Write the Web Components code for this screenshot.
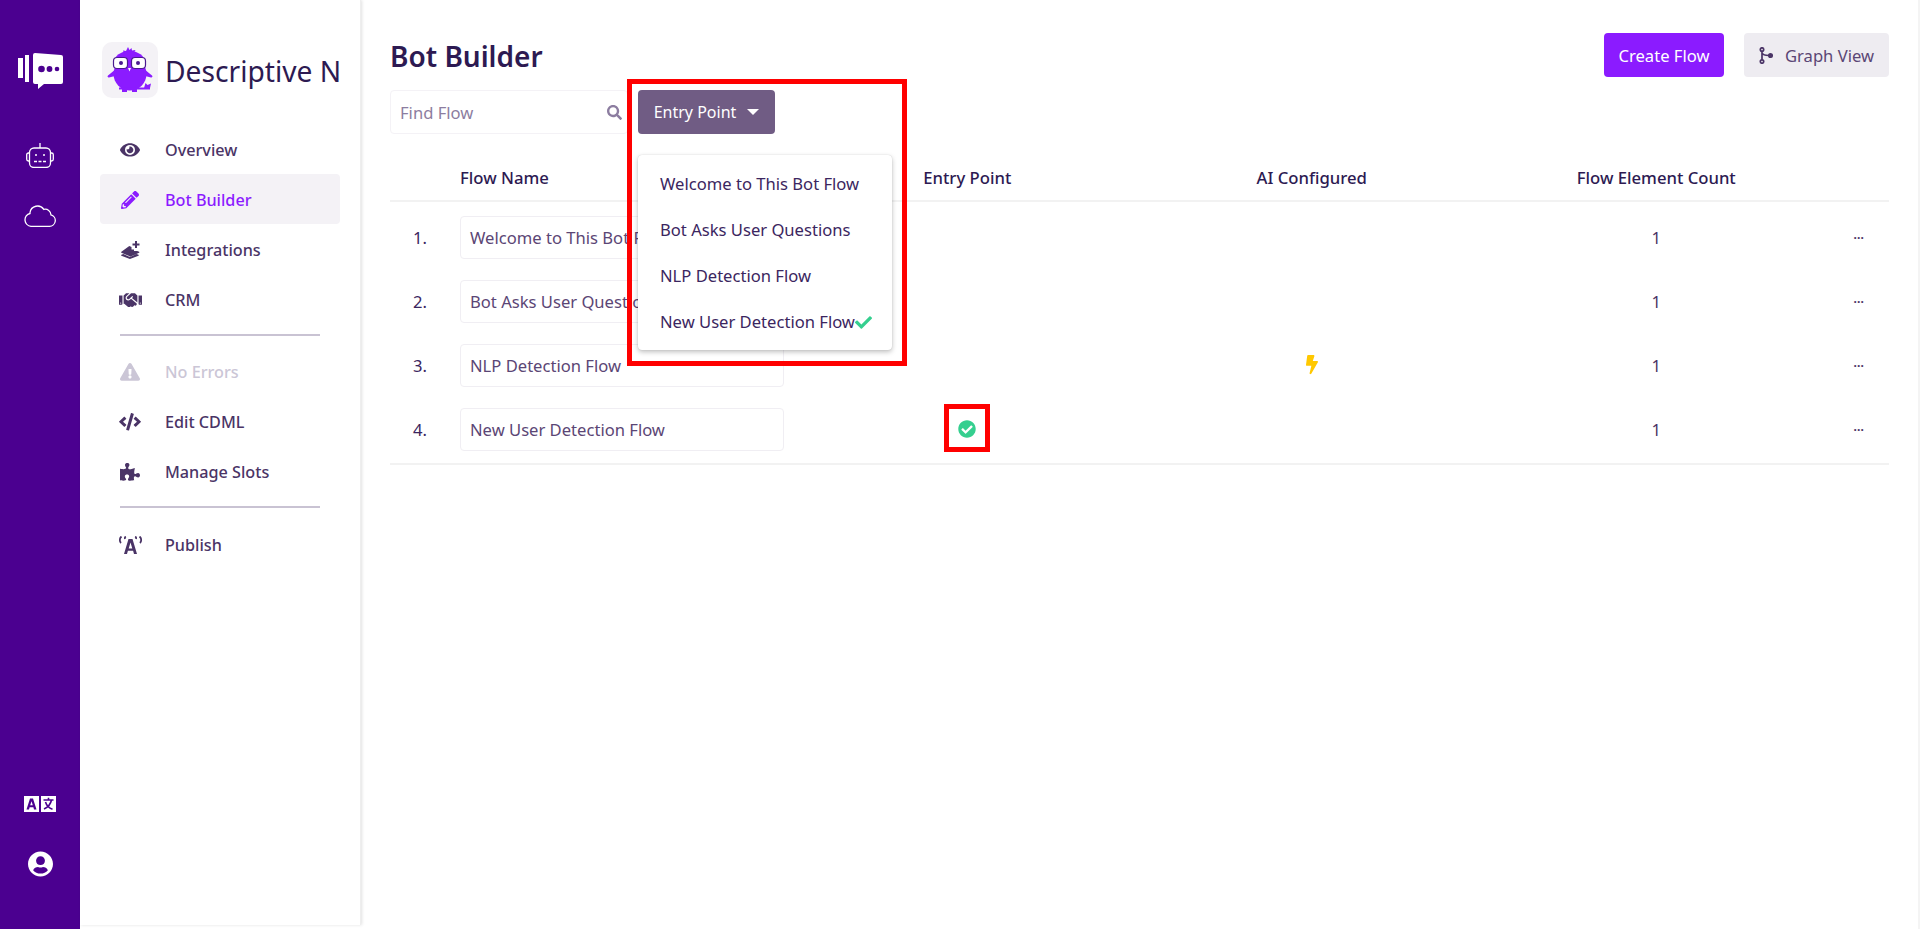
<!DOCTYPE html>
<html>
<head>
<meta charset="utf-8">
<title>Bot Builder</title>
<style>
  html, body { margin: 0; height: 100%; background: #fff; }
  body { font-family: "Noto Sans", "Open Sans", sans-serif; color: #2d1a52; overflow: hidden; }
  app-shell { height: 929px; }
</style>
</head>
<body>
<app-shell>
  <icon-rail slot="rail"></icon-rail>
  <side-nav slot="nav" name="Descriptive N"></side-nav>
  <builder-page slot="main"></builder-page>
</app-shell>

<script>
// font awesome style shapes, [viewBox width, path]
const ICONS = {
  eye: [576, 'M572.52 241.4C518.29 135.59 410.93 64 288 64S57.68 135.64 3.48 241.41a32.35 32.35 0 0 0 0 29.19C57.71 376.41 165.07 448 288 448s230.32-71.64 284.52-177.41a32.35 32.35 0 0 0 0-29.19zM288 400a144 144 0 1 1 144-144 143.93 143.93 0 0 1-144 144zm0-240a95.31 95.31 0 0 0-25.31 3.79 47.85 47.85 0 0 1-66.9 66.9A95.78 95.78 0 1 0 288 160z'],
  pencil: [512, 'M497.9 142.1l-46.1 46.1c-4.7 4.7-12.3 4.7-17 0l-111-111c-4.7-4.7-4.7-12.3 0-17l46.1-46.1c18.7-18.7 49.1-18.7 67.9 0l60.1 60.1c18.8 18.7 18.8 49.1 0 67.9zM284.2 99.8L21.6 362.4.4 483.9c-2.9 16.4 11.4 30.6 27.8 27.8l121.5-21.3 262.6-262.6c4.7-4.7 4.7-12.3 0-17l-111-111c-4.8-4.7-12.4-4.7-17.1 0zM124.1 339.9c-5.5-5.5-5.5-14.3 0-19.8l154-154c5.5-5.5 14.3-5.5 19.8 0s5.5 14.3 0 19.8l-154 154c-5.5 5.5-14.3 5.5-19.8 0zM88 424h48v36.3l-64.5 11.3-31.1-31.1L51.7 376H88v48z'],
  handshake: [640, 'M434.7 64h-85.9c-8 0-15.7 3-21.6 8.4l-98.3 90c-.1.1-.2.3-.3.4-16.6 15.6-16.3 40.5-2.1 56 12.7 13.9 39.4 17.6 56.1 2.7.1-.1.3-.1.4-.2l79.9-73.2c6.5-5.9 16.7-5.5 22.6 1 6 6.5 5.5 16.6-1 22.6l-26.1 23.9L504 313.8c2.9 2.4 5.5 5 7.9 7.7V128l-54.6-54.6c-5.9-6-14.1-9.4-22.6-9.4zM544 128.2v223.9c0 17.7 14.3 32 32 32h64V128.2h-96zm48 223.9c-8.8 0-16-7.2-16-16s7.2-16 16-16 16 7.2 16 16-7.2 16-16 16zM0 384h64c17.7 0 32-14.3 32-32V128.2H0V384zm48-63.9c8.8 0 16 7.2 16 16s-7.2 16-16 16-16-7.2-16-16c0-8.9 7.2-16 16-16zm435.9 18.6L334.6 217.5l-30 27.5c-29.7 27.1-75.2 24.5-101.7-4.4-26.9-29.4-24.8-74.9 4.4-101.7L289.1 64h-83.8c-8.5 0-16.6 3.4-22.6 9.4L128 128v223.9h18.3l90.5 81.9c27.4 22.3 67.7 18.1 90-9.3l.2-.2 17.9 15.5c15.9 13 39.4 10.5 52.3-5.4l31.4-38.6 5.4 4.4c13.7 11.1 33.9 9.1 45-4.7l9.5-11.7c11.2-13.8 9.1-33.9-4.6-45.1z'],
  warning: [576, 'M569.517 440.013C587.975 472.007 564.806 512 527.94 512H48.054c-36.937 0-59.999-40.055-41.577-71.987L246.423 23.985c18.467-32.009 64.72-31.951 83.154 0l239.94 416.028zM288 354c-25.405 0-46 20.595-46 46s20.595 46 46 46 46-20.595 46-46-20.595-46-46-46zm-43.673-165.346l7.418 136c.347 6.364 5.609 11.346 11.982 11.346h48.546c6.373 0 11.635-4.982 11.982-11.346l7.418-136c.375-6.874-5.098-12.654-11.982-12.654h-63.383c-6.884 0-12.356 5.78-11.981 12.654z'],
  code: [640, 'M278.9 511.5l-61-17.7c-6.4-1.8-10-8.5-8.2-14.9L346.2 8.7c1.8-6.4 8.5-10 14.9-8.2l61 17.7c6.4 1.8 10 8.5 8.2 14.9L293.8 503.3c-1.9 6.4-8.5 10.1-14.9 8.2zm-114-112.2l43.5-46.4c4.6-4.9 4.3-12.7-.8-17.2L117 256l90.6-79.7c5.1-4.5 5.5-12.3.8-17.2l-43.5-46.4c-4.5-4.8-12.1-5.1-17-.5L3.8 247.2c-5.1 4.7-5.1 12.8 0 17.5l144.1 135.1c4.9 4.6 12.5 4.4 17-.5zm327.2.6l144.1-135.1c5.1-4.7 5.1-12.8 0-17.5L492.1 112.1c-4.8-4.5-12.4-4.3-17 .5L431.6 159c-4.6 4.9-4.3 12.7.8 17.2L523 256l-90.6 79.7c-5.1 4.5-5.5 12.3-.8 17.2l43.5 46.4c4.5 4.9 12.1 5.1 17 .6z'],
  puzzle: [576, 'M519.442 288.651c-41.519 0-59.5 31.593-82.058 31.593C377.409 320.244 432 144 432 144s-196.288 80-196.288-3.297c0-35.827 36.288-46.25 36.288-85.985C272 19.216 243.885 0 210.539 0c-34.654 0-66.366 18.891-66.366 56.346 0 41.364 31.711 59.277 31.711 81.75C175.885 207.719 0 166.758 0 166.758v333.237s178.635 41.047 178.635-28.662c0-22.473-40-40.107-40-81.471 0-37.456 29.25-56.346 63.577-56.346 33.673 0 61.788 19.216 61.788 54.717 0 39.735-36.288 50.158-36.288 85.985 0 60.803 129.675 25.73 181.23 25.73 0 0-34.725-120.101 25.827-120.101 35.962 0 46.423 36.152 86.308 36.152C556.712 416 576 387.99 576 354.443c0-34.199-18.962-65.792-56.558-65.792z'],
  search: [512, 'M505 442.7L405.3 343c-4.5-4.5-10.6-7-17-7H372c27.6-35.3 44-79.7 44-128C416 93.1 322.9 0 208 0S0 93.1 0 208s93.1 208 208 208c48.3 0 92.7-16.4 128-44v16.3c0 6.4 2.5 12.5 7 17l99.7 99.7c9.4 9.4 24.6 9.4 33.9 0l28.3-28.3c9.4-9.4 9.4-24.6.1-34zM208 336c-70.7 0-128-57.2-128-128 0-70.7 57.2-128 128-128 70.7 0 128 57.2 128 128 0 70.7-57.2 128-128 128z'],
  check: [512, 'M173.898 439.404l-166.4-166.4c-9.997-9.997-9.997-26.206 0-36.204l36.203-36.204c9.997-9.998 26.207-9.998 36.204 0L192 312.69 432.095 72.596c9.997-9.997 26.207-9.997 36.204 0l36.203 36.204c9.997 9.997 9.997 26.206 0 36.204l-294.4 294.401c-9.998 9.997-26.207 9.997-36.204-.001z'],
  checkCircle: [512, 'M504 256c0 136.967-111.033 248-248 248S8 392.967 8 256 119.033 8 256 8s248 111.033 248 248zM227.314 387.314l184-184c6.248-6.248 6.248-16.379 0-22.627l-22.627-22.627c-6.248-6.249-16.379-6.249-22.628 0L216 308.118l-70.059-70.059c-6.248-6.248-16.379-6.248-22.628 0l-22.627 22.627c-6.248 6.248-6.248 16.379 0 22.627l104 104c6.249 6.249 16.379 6.249 22.628.001z'],
  bolt: [320, 'M296 160H180.6l42.6-129.8C227.2 15 215.7 0 200 0H56C44 0 33.8 8.9 32.2 20.8l-32 240C-1.7 275.2 9.5 288 24 288h118.7L96.6 482.5c-3.6 15.2 8 29.5 23.3 29.5 8.4 0 16.4-4.4 20.8-12l176-304c9.3-15.9-2.2-36-20.7-36z'],
  user: [496, 'M248 8C111 8 0 119 0 256s111 248 248 248 248-111 248-248S385 8 248 8zm0 96c48.6 0 88 39.4 88 88s-39.4 88-88 88-88-39.4-88-88 39.4-88 88-88zm0 344c-58.7 0-111.3-26.6-146.5-68.2 18.8-35.4 55.6-59.8 98.5-59.8 2.4 0 4.8.4 7.1 1.1 13 4.2 26.6 6.9 40.9 6.9 14.3 0 28-2.7 40.9-6.9 2.3-.7 4.7-1.1 7.1-1.1 42.9 0 79.7 24.400 98.5 59.8C359.3 421.4 306.7 448 248 448z']
};

function fa(name, w, attrs = '') {
  const [vb, d] = ICONS[name];
  return `<svg ${attrs} width="${w}" height="${w * 512 / vb}" viewBox="0 0 ${vb} 512" fill="currentColor" aria-hidden="true"><path d="${d}"/></svg>`;
}

class AppShell extends HTMLElement {
  constructor() {
    super();
    this.attachShadow({ mode: 'open' });
    this.shadowRoot.innerHTML = `
      <style>
        :host { display: grid; grid-template-columns: 80px 281px 1fr; height: 100%; }
      </style>
      <slot name="rail"></slot>
      <slot name="nav"></slot>
      <slot name="main"></slot>`;
  }
}

class IconRail extends HTMLElement {
  constructor() {
    super();
    this.attachShadow({ mode: 'open' });
    this.shadowRoot.innerHTML = `
      <style>
        :host { display: flex; flex-direction: column; align-items: center; background: #4b0090; color: #fff; height: 100%; }
        svg { display: block; flex: none; }
        .logo { margin-top: 53px; }
        .bot { margin-top: 54px; }
        .cloud { margin-top: 36px; }
        .lang { margin-top: auto; }
        .user { margin-top: 39px; margin-bottom: 52px; }
      </style>
      <svg class="logo" width="45" height="36" viewBox="0 0 45 36">
        <rect x="0" y="5" width="5" height="20" fill="#fff"/>
        <rect x="7" y="2" width="4" height="27" fill="#fff"/>
        <path d="M15 2a2 2 0 0 1 2-2l26 2a2 2 0 0 1 2 2v25a2 2 0 0 1-2 2H26l-6 5v-5h-3a2 2 0 0 1-2-2z" fill="#fff"/>
        <circle cx="23.500" cy="16" r="3.300" fill="#4b0090"/><circle cx="31.500" cy="16" r="2.900" fill="#4b0090"/><circle cx="39" cy="16" r="2.300" fill="#4b0090"/>
      </svg>
      <svg class="bot" width="28" height="25" viewBox="0 0 28 25" fill="none" stroke="#fff" stroke-width="1.300">
        <path d="M14 0v5"/>
        <rect x="3.500" y="5" width="21" height="19.500" rx="4.500"/>
        <path d="M3.500 10H2.500A1.800 1.800 0 0 0 .7 11.800v4.400A1.800 1.800 0 0 0 2.500 18h1M24.500 10h1a1.800 1.800 0 0 1 1.800 1.800v4.400a1.800 1.800 0 0 1-1.800 1.800h-1"/>
        <circle cx="10" cy="12" r="1" fill="#fff" stroke="none"/><circle cx="18" cy="12" r="1" fill="#fff" stroke="none"/>
        <path d="M8 18.500h3M12.500 18.500h3M17 18.500h3"/>
      </svg>
      <svg class="cloud" width="32" height="23" viewBox="0 0 32 23" fill="none" stroke="#fff" stroke-width="1.300">
        <path d="M7 22.300h18.500a5.800 5.800 0 0 0 1.500-11.400 5.800 5.800 0 0 0-7.200-5.500A7.600 7.600 0 0 0 6 8.500v1A6.500 6.500 0 0 0 7 22.300z"/>
      </svg>
      <svg class="lang" width="32" height="16" viewBox="0 0 32 16">
        <rect x="0" y="0" width="15" height="16" fill="#fff"/>
        <rect x="17" y="0" width="15" height="16" fill="#fff"/>
        <path d="M6 2.500h3l3.500 11H10l-.6-2.300H5.600L5 13.500H2.500zM7.500 5.300 6.200 9.300h2.600z" fill="#4b0090" fill-rule="evenodd"/>
        <path d="M24.500 1.800v2M19.500 4h10M27.500 4c-.8 3.800-3.600 7.300-7.500 9M21.500 6c1 3.400 3.800 6.200 7 7.300" fill="none" stroke="#4b0090" stroke-width="1.600"/>
      </svg>
      ${fa('user', 25, 'class="user"')}`;
  }
}

class NavItem extends HTMLElement {
  constructor() {
    super();
    this.attachShadow({ mode: 'open' });
    this.shadowRoot.innerHTML = `
      <style>
        :host { display: flex; align-items: center; height: 50px; box-sizing: border-box; border-radius: 4px; padding: 2px 0 0 20px; color: #4a3466; font-size: 16.200px; font-weight: 500; }
        :host([active]) { background: #f4f2f6; color: #8b1bff; }
        :host([muted]) { color: #cbc6d6; }
        .ico { width: 20px; height: 20px; display: flex; align-items: center; justify-content: center; margin-right: 25px; }
      </style>
      <span class="ico"><slot name="icon"></slot></span>
      <slot></slot>`;
  }
}

class SideNav extends HTMLElement {
  constructor() {
    super();
    this.attachShadow({ mode: 'open' });
    const name = this.getAttribute('name');
    this.shadowRoot.innerHTML = `
      <style>
        :host { display: block; height: 925px; box-sizing: border-box; border-right: 1px solid #eee; box-shadow: 1px 0 3px rgba(0,0,0,.12); padding: 42px 20px 0; background: #fff; }
        .brand { display: flex; align-items: center; gap: 7px; margin: 0 0 26px 2px; white-space: nowrap; font-size: 28.200px; color: #2d1a52; }
        .brand span + span { position: relative; top: 1px; }
        .owl { flex: none; width: 56px; height: 56px; border-radius: 10px; background: #f4f2f6; display: flex; align-items: center; justify-content: center; }
        hr { border: 0; height: 2px; background: #c9c3d3; margin: 10px 20px 10px; }
        hr.two { margin: 10px 20px 11px; }
        svg { display: block; flex: none; }
      </style>
      <div class="brand">
        <span class="owl">
          <svg width="46" height="46" viewBox="0 0 46 46" fill="#8b1bff">
            <path d="M21 0l1.500 3 2-2 .5 2.500 3.500-.5-2 3.500H17l-1-3 3 .5z"/>
            <ellipse cx="22.500" cy="15.500" rx="15.500" ry="11.500"/>
            <circle cx="23" cy="27" r="16.500"/>
            <path d="M9 22L1 28.500c-1 .9-.3 2.200 1 2l8-2zM37 22l8 6.500c1 .9.300 2.200-1 2l-8-2z"/>
            <path d="M12 40.500h31v2H12zM37 41l1.500-5 2 2 3.500-1.500-1 4.500z"/>
            <path d="M15 42h5v3h-5zM25 42h5v3h-5z"/>
            <rect x="6.500" y="10.500" width="14" height="11" rx="3.500" fill="#fff" stroke="#4a1a90" stroke-width="1.200"/>
            <rect x="24.500" y="10.500" width="14" height="11" rx="3.500" fill="#fff" stroke="#4a1a90" stroke-width="1.200"/>
            <circle cx="14" cy="16" r="2" fill="#4a1a90"/><circle cx="31" cy="16" r="2" fill="#4a1a90"/>
            <path d="M21 21h3l-1.500 3.500z" fill="#fff"/>
          </svg>
        </span>
        <span>${name}</span>
      </div>
      <nav-item>${fa('eye', 20, 'slot="icon"')}Overview</nav-item>
      <nav-item active>${fa('pencil', 18, 'slot="icon"')}Bot Builder</nav-item>
      <nav-item><svg slot="icon" width="19" height="18" viewBox="0 0 19 18" fill="currentColor"><path d="M14 0h2v2.500h2.500v2H16V7h-2V4.500h-2.500v-2H14zM8.300 5l2.200 1v2.500H13V10h3.200l1.900.8c.4.200.4.700 0 .9l-8 3.600a1.500 1.500 0 0 1-1.300 0L.4 11.700c-.4-.2-.4-.7 0-.9zM2.300 13l6 2.700a1.500 1.500 0 0 0 1.300 0l6-2.700 1.900.8c.4.200.4.700 0 .9l-7.900 3.100a1.500 1.500 0 0 1-1.300 0L.4 14.700c-.4-.2-.4-.7 0-.9z"/></svg>Integrations</nav-item>
      <nav-item>${fa('handshake', 23, 'slot="icon"')}CRM</nav-item>
      <hr>
      <nav-item muted>${fa('warning', 20, 'slot="icon"')}No Errors</nav-item>
      <nav-item>${fa('code', 22, 'slot="icon"')}Edit CDML</nav-item>
      <nav-item>${fa('puzzle', 20, 'slot="icon"')}Manage Slots</nav-item>
      <hr class="two">
      <nav-item><svg slot="icon" width="23" height="18" viewBox="0 0 23 18" fill="currentColor"><path d="M9.500 3h4L18 18h-3l-.9-3.200H8.900L8 18H5zM11.500 6.500l-1.800 6h3.600z" fill-rule="evenodd"/><path d="M2.500.5C1.300 1.500.8 2.800.8 4s.5 2.300 1.200 3M20.500.5c1.200 1 1.700 2.300 1.700 3.500s-.5 2.300-1.200 3M6.800.5C6 1 5.700 2 6 3M16.200.5C17 1 17.300 2 17 3" fill="none" stroke="currentColor" stroke-width="1.800"/></svg>Publish</nav-item>`;
  }
}

class FlowRow extends HTMLElement {
  constructor() {
    super();
    this.attachShadow({ mode: 'open' });
    this.shadowRoot.innerHTML = `
      <style>
        :host { display: grid; grid-template-columns: 70px 335px 344.500px 344.500px 344.500px 1fr; align-items: center; height: 64px; font-size: 16.600px; color: #4a3466; }
        .n { padding-left: 23px; color: #3b2660; }
        .box { box-sizing: border-box; width: 324px; height: 43px; border: 1px solid #f0eef3; border-radius: 4px; padding: 0 9px; line-height: 41px; white-space: nowrap; overflow: hidden; color: #5b4675; }
        .c { display: flex; justify-content: center; }
        .dots { text-align: center; font-weight: 700; font-size: 12px; letter-spacing: .2px; }
      </style>
      <span class="n">${this.getAttribute('n')}.</span>
      <span class="box">${this.getAttribute('name')}</span>
      <span class="c"><slot name="entry"></slot></span>
      <span class="c"><slot name="ai"></slot></span>
      <span class="c">1</span>
      <span class="dots">···</span>`;
  }
}

class EntryDropdown extends HTMLElement {
  constructor() {
    super();
    this.attachShadow({ mode: 'open' });
    const items = ['Welcome to This Bot Flow', 'Bot Asks User Questions', 'NLP Detection Flow', 'New User Detection Flow'];
    this.shadowRoot.innerHTML = `
      <style>
        :host { display: block; position: relative; width: 137px; height: 44px; }
        button { width: 137px; height: 44px; border: 0; border-radius: 4px; background: #705c84; color: #fff; font: 400 16px "Noto Sans", sans-serif; display: flex; align-items: center; justify-content: center; gap: 11px; padding: 0; }
        .caret { width: 0; height: 0; border: 6px solid transparent; border-top: 6px solid #fff; border-bottom: 0; }
        .menu { position: absolute; left: 0; top: 65px; width: 254px; height: 195px; box-sizing: border-box; background: #fff; border-radius: 4px; box-shadow: 0 2px 5px rgba(0,0,0,.25), 0 0 1px rgba(0,0,0,.2); padding: 6px 0 0 22px; z-index: 3; font-size: 16.600px; color: #3b2660; }
        .menu div { height: 46px; line-height: 46px; white-space: nowrap; display: flex; align-items: center; color: #3b2660; }
        .menu svg { display: block; flex: none; color: #35cf8f; }
      </style>
      <button>Entry Point <span class="caret"></span></button>
      <div class="menu">
        ${items.map((t, i) => `<div>${t}${i === 3 ? fa('check', 17) : ''}</div>`).join('')}
      </div>`;
  }
}

class BuilderPage extends HTMLElement {
  constructor() {
    super();
    this.attachShadow({ mode: 'open' });
    this.shadowRoot.innerHTML = `
      <style>
        :host { display: block; position: relative; height: 100%; box-sizing: border-box; padding: 33px 29px 0 29px; border-right: 2px solid #f4f4f4; }
        .top { display: flex; align-items: flex-start; justify-content: space-between; height: 57px; }
        h1 { margin: 0; font-size: 28px; line-height: 46px; font-weight: 600; color: #2d1a52; }
        .actions { display: flex; gap: 20px; }
        .btn { height: 44px; border-radius: 4px; display: flex; align-items: center; justify-content: center; font-size: 16.600px; }
        .create { width: 120px; background: #8b1bff; color: #fff; }
        .graph { width: 145px; background: #eeecf1; color: #5b4675; gap: 12px; }
        .graph svg { color: #4a3466; }
        .tools { display: flex; gap: 10px; height: 44px; }
        .find { box-sizing: border-box; width: 238px; border: 1px solid #f4f2f6; border-radius: 4px; display: flex; align-items: center; justify-content: space-between; padding: 0 0 0 9px; color: #8c7da0; font-size: 16.600px; }
        .find svg { margin-right: 5px; color: #8c7da0; }
        .thead { box-sizing: border-box; display: grid; grid-template-columns: 70px 335px 344.500px 344.500px 344.500px 1fr; align-items: center; height: 68px; padding-top: 21px; border-bottom: 2px solid #f2f2f2; font-size: 16.700px; font-weight: 500; color: #2d1a52; }
        .thead .c { text-align: center; }
        .rows { border-bottom: 2px solid #f2f2f2; padding: 3px 0 2px; }
        .mark { position: absolute; box-sizing: border-box; border: 5px solid #ff0000; pointer-events: none; z-index: 4; }
        .m1 { left: 266px; top: 79px; width: 280px; height: 287px; }
        .m2 { left: 583px; top: 404px; width: 46px; height: 48px; }
        svg { display: block; }
      </style>
      <div class="top">
        <h1>Bot Builder</h1>
        <div class="actions">
          <div class="btn create">Create Flow</div>
          <div class="btn graph">
            <svg width="14" height="17" viewBox="0 0 14 17" fill="none" stroke="currentColor" stroke-width="1.700"><circle cx="3" cy="2.500" r="1.700"/><circle cx="3" cy="14.500" r="1.700"/><circle cx="11.500" cy="8.500" r="1.700" fill="currentColor"/><path d="M3 4.200v8.600M3 6c.8 1.800 3 2.500 6.800 2.500"/></svg>
            Graph View
          </div>
        </div>
      </div>
      <div class="tools">
        <div class="find">Find Flow ${fa('search', 15)}</div>
        <entry-dropdown></entry-dropdown>
      </div>
      <div class="thead">
        <span></span><span>Flow Name</span><span class="c">Entry Point</span><span class="c">AI Configured</span><span class="c">Flow Element Count</span><span></span>
      </div>
      <div class="rows">
        <flow-row n="1" name="Welcome to This Bot Flow"></flow-row>
        <flow-row n="2" name="Bot Asks User Questions"></flow-row>
        <flow-row n="3" name="NLP Detection Flow">${fa('bolt', 12, 'slot="ai" style="color:#ffc800;display:block"')}</flow-row>
        <flow-row n="4" name="New User Detection Flow">${fa('checkCircle', 18, 'slot="entry" style="color:#35cf8f;display:block"')}</flow-row>
      </div>
      <div class="mark m1"></div>
      <div class="mark m2"></div>`;
  }
}

customElements.define('app-shell', AppShell);
customElements.define('icon-rail', IconRail);
customElements.define('nav-item', NavItem);
customElements.define('side-nav', SideNav);
customElements.define('flow-row', FlowRow);
customElements.define('entry-dropdown', EntryDropdown);
customElements.define('builder-page', BuilderPage);
</script>
</body>
</html>
